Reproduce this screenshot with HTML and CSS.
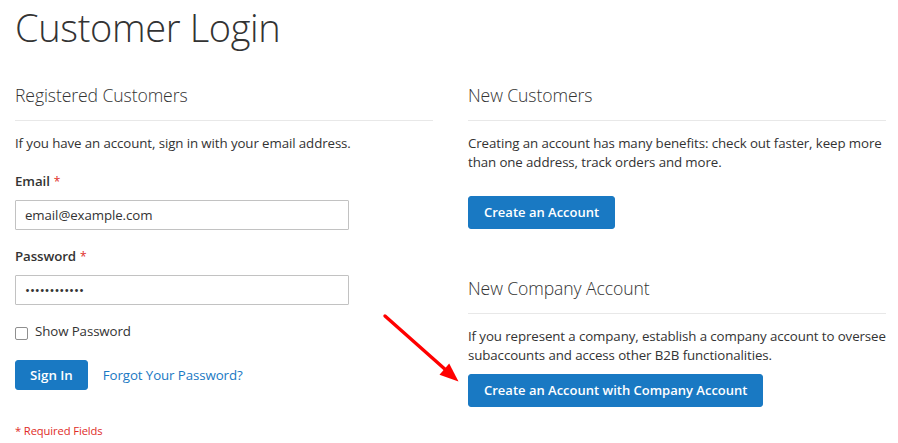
FILE: index.html
```html
<!DOCTYPE html>
<html lang="en">
<head>
<meta charset="utf-8">
<title>Customer Login</title>
<link rel="stylesheet" href="styles.css">
</head>
<body>
<main class="page">
  <h1 class="page-title">Customer Login</h1>
  <div class="login-container">
    <section class="block">
      <h2 class="block-title">Registered Customers</h2>
      <p class="note">If you have an account, sign in with your email address.</p>
      <form class="form" onsubmit="return false">
        <div class="field">
          <label class="label" for="email">Email<span class="req">*</span></label>
          <input class="input" id="email" type="email" value="email@example.com">
        </div>
        <div class="field">
          <label class="label" for="pass">Password<span class="req">*</span></label>
          <input class="input" id="pass" type="password" value="123456789012">
        </div>
        <label class="check-row"><span class="checkbox"></span><span>Show Password</span></label>
        <div class="actions">
          <button class="btn btn-sm" type="button">Sign In</button>
          <a class="link" href="#">Forgot Your Password?</a>
        </div>
        <p class="required">* Required Fields</p>
      </form>
    </section>
    <section class="block">
      <h2 class="block-title">New Customers</h2>
      <p class="note">Creating an account has many benefits: check out faster, keep more than one address, track orders and more.</p>
      <button class="btn btn-create" type="button">Create an Account</button>
      <h2 class="block-title company-title">New Company Account</h2>
      <p class="note">If you represent a company, establish a company account to oversee subaccounts and access other B2B functionalities.</p>
      <button class="btn btn-company" type="button">Create an Account with Company Account</button>
    </section>
  </div>
  <svg class="arrow" width="90" height="80" viewBox="370 305 90 80" aria-hidden="true">
    <line x1="385" y1="316" x2="447" y2="371" stroke="#ff0000" stroke-width="3.4" stroke-linecap="round"/>
    <polygon points="458.5,381.5 439.5,374.8 449.2,363.6" fill="#ff0000"/>
  </svg>
</main>
</body>
</html>
```
FILE: styles.css
```css
* { box-sizing: border-box; }
html, body { margin: 0; padding: 0; background: #fff; }
body {
  font-family: "Open Sans", "Liberation Sans", sans-serif;
  font-size: 13.3px;
  letter-spacing: -0.1px;
  line-height: 19px;
  color: #333;
}
.page {
  position: relative;
  width: 898px;
  height: 443px;
  overflow: hidden;
  padding: 0 15px;
}
.page-title {
  margin: 3px 0 0;
  font-size: 38px;
  letter-spacing: -0.35px;
  font-weight: 300;
  line-height: 48px;
  color: #333;
}
.login-container {
  display: flex;
  gap: 35px;
  margin-top: 32px;
}
.block { width: 418px; flex: none; }
.block-title {
  margin: 0;
  font-size: 17.6px;
  letter-spacing: -0.1px;
  font-weight: 300;
  line-height: 24px;
  padding-bottom: 13px;
  border-bottom: 1px solid #e8e8e8;
  color: #333;
}
.note { margin: 13px 0 0; }
.form { margin-top: 19px; }
.field { display: flex; flex-direction: column; margin-bottom: 17px; }
.label { font-weight: 600; line-height: 19px; margin-bottom: 9px; }
.req { color: #e02b27; font-size: 12px; line-height: 1; margin-left: 4px; font-weight: 400; }
.input {
  width: 334px;
  height: 30px;
  border: 1px solid #c2c2c2;
  border-radius: 1px;
  padding: 0 9px;
  font-family: "Open Sans", "Liberation Sans", sans-serif;
  font-size: 13.3px;
  letter-spacing: -0.1px;
  color: #333;
  background: #fff;
  outline: none;
}
.check-row { display: flex; align-items: flex-start; gap: 7px; line-height: 19px; }
.checkbox {
  width: 13px; height: 13px; margin-top: 5px;
  border: 1px solid #8f8f8f; border-radius: 2px; background: #fff;
}
.actions { display: flex; align-items: center; gap: 15px; margin-top: 19px; }
.btn {
  display: block;
  border: 1px solid #1979c3;
  background: #1979c3;
  color: #fff;
  font-family: "Open Sans", "Liberation Sans", sans-serif;
  font-size: 13px;
  font-weight: 600;
  border-radius: 3px;
  padding: 7px 15px;
  line-height: 17px;
  height: 33px;
}
.btn-sm { height: 30px; padding: 6px 14px; line-height: 16px; font-size: 13.3px; }
.link { color: #1979c3; text-decoration: none; }
.required { margin: 33px 0 0; font-size: 11.2px; line-height: 16px; color: #e02b27; }
.btn-create { margin-top: 24px; }
.company-title { margin-top: 47px; }
.btn-company { margin-top: 9px; }
.arrow { position: absolute; left: 370px; top: 305px; }
```
